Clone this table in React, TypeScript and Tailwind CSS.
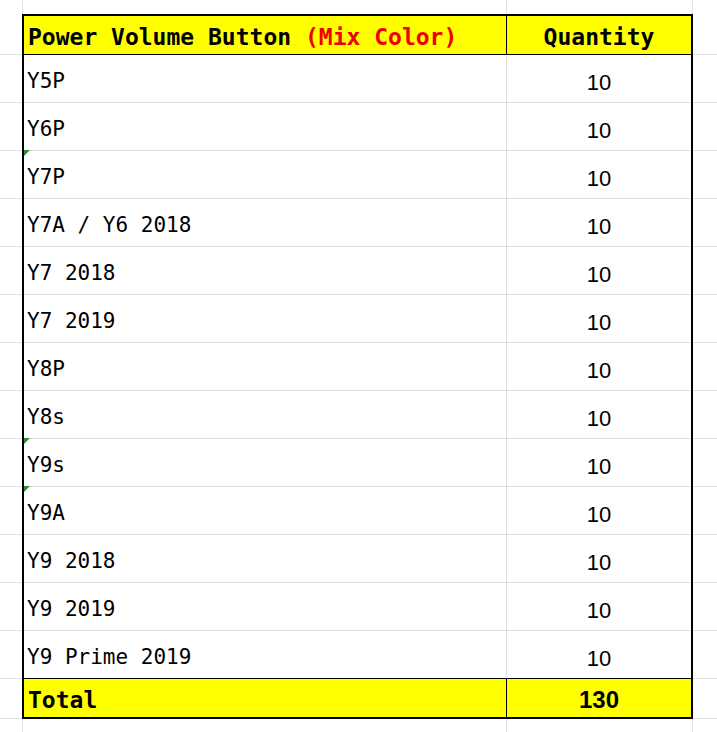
import React from "react";

type Item = { name: string; qty: number; flag?: boolean };

const items: Item[] = [
  { name: "Y5P", qty: 10 },
  { name: "Y6P", qty: 10 },
  { name: "Y7P", qty: 10, flag: true },
  { name: "Y7A / Y6 2018", qty: 10 },
  { name: "Y7 2018", qty: 10 },
  { name: "Y7 2019", qty: 10 },
  { name: "Y8P", qty: 10 },
  { name: "Y8s", qty: 10 },
  { name: "Y9s", qty: 10, flag: true },
  { name: "Y9A", qty: 10, flag: true },
  { name: "Y9 2018", qty: 10 },
  { name: "Y9 2019", qty: 10 },
  { name: "Y9 Prime 2019", qty: 10 },
];

const mono = "font-['DejaVu_Sans_Mono','Liberation_Mono',monospace]";
const sans = "font-['Liberation_Sans',Arial,sans-serif]";

// plain spreadsheet cells outside the bordered table
const GridSide = () => (
  <div className="flex flex-col">
    <div className="h-[41px] border-b border-[#e2e2e2]" />
    {items.map((it) => (
      <div key={it.name} className="h-[48px] border-b border-[#e2e2e2]" />
    ))}
    <div className="h-[40px] border-b border-[#e2e2e2]" />
  </div>
);

export default function App() {
  const total = items.reduce((s, i) => s + i.qty, 0);

  return (
    <div className={`w-[717px] h-[732px] bg-white overflow-hidden text-black ${mono}`}>
      {/* row 1 */}
      <div className="flex h-[14px]">
        <div className="w-[23px] shrink-0 border-r border-[#e2e2e2]" />
        <div className="w-[484px] shrink-0 border-r border-[#e2e2e2]" />
        <div className="w-[186px] shrink-0 border-r border-[#e2e2e2]" />
        <div className="flex-1" />
      </div>

      <div className="flex">
        <div className="w-[22px] shrink-0">
          <GridSide />
        </div>

        {/* bordered table */}
        <div className="w-[671px] shrink-0 border-2 border-black">
          <div className="flex h-[39px] bg-[#ffff00] border-b border-black font-bold text-[23px]">
            <div className="w-[483px] shrink-0 border-r border-black flex items-center pl-[4px] pt-[4px] whitespace-pre">
              Power Volume Button <span className="text-[#f00000]">(Mix Color)</span>
            </div>
            <div className="flex-1 flex items-center justify-center pt-[4px]">Quantity</div>
          </div>

          {items.map((it, idx) => (
            <div
              key={it.name}
              className={`flex h-[48px] border-b text-[21px] ${
                idx === items.length - 1 ? "border-black" : "border-[#dedede]"
              }`}
            >
              <div className="relative w-[483px] shrink-0 border-r border-[#dedede] flex items-center pl-[3px] pt-[7px] whitespace-pre">
                {it.flag && (
                  <span className="absolute left-0 -top-[1px] w-0 h-0 border-t-[6px] border-t-[#2e8b2e] border-r-[6px] border-r-transparent" />
                )}
                {it.name}
              </div>
              <div className={`flex-1 flex items-center justify-center pt-[7px] text-[22px] ${sans}`}>{it.qty}</div>
            </div>
          ))}

          <div className="flex h-[38px] bg-[#ffff00] font-bold text-[23px]">
            <div className="w-[483px] shrink-0 border-r border-black flex items-center pl-[4px] pt-[4px]">Total</div>
            <div className={`flex-1 flex items-center justify-center pt-[4px] text-[24px] ${sans}`}>{total}</div>
          </div>
        </div>

        <div className="flex-1">
          <GridSide />
        </div>
      </div>

      {/* rows below the table */}
      <div className="flex h-[20px]">
        <div className="w-[23px] shrink-0 border-r border-[#e2e2e2]" />
        <div className="w-[484px] shrink-0 border-r border-[#e2e2e2]" />
        <div className="w-[186px] shrink-0 border-r border-[#e2e2e2]" />
        <div className="flex-1" />
      </div>
    </div>
  );
}
